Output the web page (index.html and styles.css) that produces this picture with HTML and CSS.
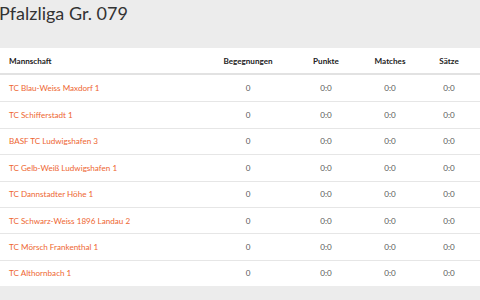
FILE: index.html
```html
<!DOCTYPE html>
<html lang="de">
<head>
<meta charset="utf-8">
<title>Pfalzliga Gr. 079</title>
<link rel="stylesheet" href="styles.css">
</head>
<body>
<h1 class="title">Pfalzliga Gr. 079</h1>
<div class="panel">
<table class="standings">
<colgroup>
<col class="c-team"><col class="c-beg"><col class="c-pkt"><col class="c-mat"><col class="c-satz">
</colgroup>
<thead>
<tr><th class="left">Mannschaft</th><th>Begegnungen</th><th>Punkte</th><th>Matches</th><th class="last">Sätze</th></tr>
</thead>
<tbody>
<tr><td class="left"><a href="#">TC Blau-Weiss Maxdorf 1</a></td><td>0</td><td>0:0</td><td>0:0</td><td class="last">0:0</td></tr>
<tr><td class="left"><a href="#">TC Schifferstadt 1</a></td><td>0</td><td>0:0</td><td>0:0</td><td class="last">0:0</td></tr>
<tr><td class="left"><a href="#">BASF TC Ludwigshafen 3</a></td><td>0</td><td>0:0</td><td>0:0</td><td class="last">0:0</td></tr>
<tr><td class="left"><a href="#">TC Gelb-Weiß Ludwigshafen 1</a></td><td>0</td><td>0:0</td><td>0:0</td><td class="last">0:0</td></tr>
<tr><td class="left"><a href="#">TC Dannstadter Höhe 1</a></td><td>0</td><td>0:0</td><td>0:0</td><td class="last">0:0</td></tr>
<tr><td class="left"><a href="#">TC Schwarz-Weiss 1896 Landau 2</a></td><td>0</td><td>0:0</td><td>0:0</td><td class="last">0:0</td></tr>
<tr><td class="left"><a href="#">TC Mörsch Frankenthal 1</a></td><td>0</td><td>0:0</td><td>0:0</td><td class="last">0:0</td></tr>
<tr><td class="left"><a href="#">TC Althornbach 1</a></td><td>0</td><td>0:0</td><td>0:0</td><td class="last">0:0</td></tr>
</tbody>
</table>
</div>
<div class="below"><a href="#">Liga</a><span>Spiel</span></div>
</body>
</html>
```
FILE: styles.css
```css
html, body {
  margin: 0;
  padding: 0;
  background: #ececec;
  font-family: Lato, "Open Sans", sans-serif;
  color: #444;
  overflow: hidden;
}
.title {
  margin: 0 0 0 -1px;
  height: 48px;
  padding-top: 2px;
  box-sizing: border-box;
  font-size: 18px;
  font-weight: 400;
  line-height: 22px;
  color: #333;
}
.panel {
  background: #fff;
}
.standings {
  width: 100%;
  border-collapse: separate;
  border-spacing: 0;
  table-layout: fixed;
  font-size: 8.1px;
}
.c-team { width: 212px; }
.c-beg { width: 72px; }
.c-pkt { width: 84px; }
.c-mat { width: 44px; }
.c-satz { width: 68px; }
.standings th {
  height: 25px;
  padding: 0;
  font-weight: 700;
  color: #222;
  text-align: center;
  border-bottom: 2px solid #e2e2e2;
}
.standings td {
  height: 25.4px;
  padding: 0;
  text-align: center;
  color: #555;
  border-top: 1px solid #e6e6e6;
}
.standings tbody tr:first-child td { border-top: 0; height: 26.4px; }
.standings .left { text-align: left; padding-left: 9px; }
.standings .last { padding-left: 6px; }
.standings a {
  color: #ee6631;
  text-decoration: none;
}
.below {
  padding-top: 13px;
  display: flex;
  gap: 36px;
  font-size: 9px;
}
.below a { color: #ee6631; text-decoration: none; }
.below span { color: #888; }
```
